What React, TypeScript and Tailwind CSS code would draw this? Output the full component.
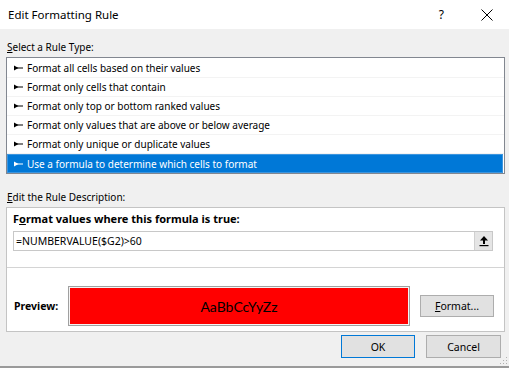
import React from "react";

const font = { fontFamily: '"Noto Sans", "Open Sans", sans-serif' };

function Arrow({ white }: { white?: boolean }) {
  const c = white ? "#ffffff" : "#000000";
  return (
    <svg width="9" height="6" viewBox="0 0 9 6" className="shrink-0">
      <polygon points="0,0.5 4.5,3 0,5.5" fill={c} />
      <rect x="0" y="2.5" width="9" height="1" fill={c} />
    </svg>
  );
}

const rules = [
  "Format all cells based on their values",
  "Format only cells that contain",
  "Format only top or bottom ranked values",
  "Format only values that are above or below average",
  "Format only unique or duplicate values",
  "Use a formula to determine which cells to format",
];

export default function App() {
  return (
    <div
      className="relative w-[509px] h-[368px] bg-[#f0f0f0] text-[10px] text-black overflow-hidden flex flex-col"
      style={font}
    >
      {/* Title bar */}
      <div className="h-[29px] bg-white flex items-center shrink-0">
        <div className="ml-[8px] text-[11.5px] leading-[16px]">Edit Formatting Rule</div>
        <div className="ml-auto mr-[37px] text-[12px] leading-[16px]">?</div>
        <svg width="12" height="12" viewBox="0 0 12 12" className="mr-[16px]">
          <path d="M0.5 0.5 L11.5 11.5 M11.5 0.5 L0.5 11.5" stroke="#000" strokeWidth="1" />
        </svg>
      </div>

      {/* Body */}
      <div className="flex flex-col pl-[6px]">
        <div className="mt-[10px] leading-[16px] pl-[1px]">
          <span className="underline">S</span>elect a Rule Type:
        </div>
        <div className="mt-[2px] w-[499px] border border-[#828790] bg-white pt-[1px] flex flex-col">
          {rules.map((r, i) => {
            const sel = i === rules.length - 1;
            return (
              <div
                key={r}
                className={
                  sel
                    ? "h-[19px] flex items-center gap-[4px] pl-[6px] bg-[#0078d7] text-white border border-[#3c95de] mr-[1px]"
                    : "h-[19px] flex items-center gap-[4px] pl-[7px] border-b border-[#f3f3f3]"
                }
              >
                <Arrow white={sel} />
                <span className="leading-[16px] whitespace-nowrap">{r}</span>
              </div>
            );
          })}
        </div>

        <div className="mt-[15px] leading-[16px] pl-[1px]">
          <span className="underline">E</span>dit the Rule Description:
        </div>
        <div className="mt-[2px] w-[499px] h-[125px] border border-[#c4c4c4] bg-white flex flex-col">
          <div className="mt-[3px] ml-[6px] leading-[16px] font-bold text-[11px]">
            F<span className="underline">o</span>rmat values where this formula is true:
          </div>
          <div className="mt-[4px] ml-[6px] w-[480px] h-[20px] border border-[#c8c8c8] flex items-center">
            <span className="ml-[2px] leading-[16px] text-[10.5px]">=NUMBERVALUE($G2)&gt;60</span>
            <div className="ml-auto h-[18px] w-[18px] bg-[#e5e5e5] border-l border-[#d0d0d0] flex items-center justify-center">
              <svg width="10" height="12" viewBox="0 0 10 12">
                <polygon points="5,1 9,5.5 1,5.5" fill="#000" />
                <rect x="4" y="5" width="2" height="4" fill="#000" />
                <rect x="0.5" y="10" width="9" height="1.2" fill="#000" />
              </svg>
            </div>
          </div>
          <div className="mt-[16px] h-[1px] bg-[#d4d4d4]" />
          <div className="mt-[18px] flex items-center">
            <div className="ml-[7px] w-[53px] font-bold leading-[16px] text-[10.5px]">Preview:</div>
            <div className="ml-[1px] w-[342px] h-[40px] border border-[#a0a0a0] p-[1px] bg-[#f4f4f4]">
              <div
                className="w-full h-full bg-[#ff0000] flex items-center justify-center text-[14px] text-black"
                style={{ fontFamily: 'Lato, "Noto Sans", sans-serif' }}
              >
                AaBbCcYyZz
              </div>
            </div>
            <div className="ml-[10px] w-[74px] h-[22px] bg-[#e1e1e1] border border-[#adadad] flex items-center justify-center leading-[16px] text-[10.5px]">
              <span>
                <span className="underline">F</span>ormat...
              </span>
            </div>
          </div>
        </div>

        <div className="mt-[3px] flex justify-end gap-[11px] w-[495px] text-[10.5px]">
          <div className="w-[74px] h-[23px] bg-[#e1e1e1] border border-[#0078d7] flex items-center justify-center leading-[16px]">
            OK
          </div>
          <div className="w-[75px] h-[23px] bg-[#e1e1e1] border border-[#adadad] flex items-center justify-center leading-[16px]">
            Cancel
          </div>
        </div>
      </div>

      {/* bottom excel grid strip */}
      <div className="absolute left-0 right-0 bottom-0 h-[2px] bg-[#9a9a9a]" />

      {/* resize grip */}
      <svg width="8" height="8" viewBox="0 0 8 8" className="absolute right-[1px] bottom-[3px]">
        <rect x="6" y="0" width="1" height="1" fill="#b0b0b0" />
        <rect x="3" y="3" width="1" height="1" fill="#b0b0b0" />
        <rect x="6" y="3" width="1" height="1" fill="#b0b0b0" />
        <rect x="0" y="6" width="1" height="1" fill="#b0b0b0" />
        <rect x="3" y="6" width="1" height="1" fill="#b0b0b0" />
        <rect x="6" y="6" width="1" height="1" fill="#b0b0b0" />
      </svg>
    </div>
  );
}
